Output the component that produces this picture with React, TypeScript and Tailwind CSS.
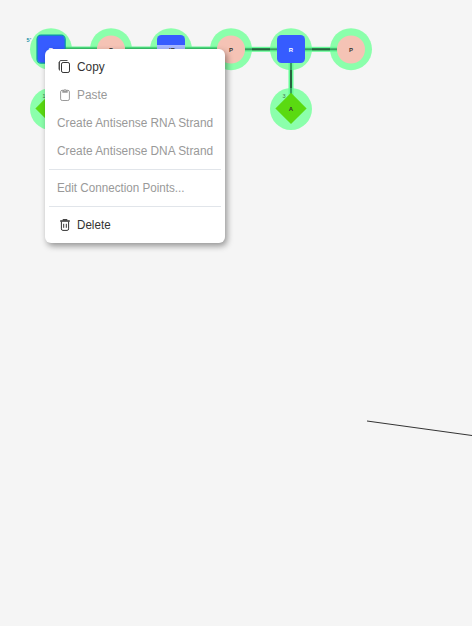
import type { ReactNode } from 'react';

const MINT = '#8bffab';

function Halo({ x, y }: { x: number; y: number }) {
  return <circle cx={x} cy={y} r="21" fill={MINT} />;
}

function Bond({ x1, y1, x2, y2 }: { x1: number; y1: number; x2: number; y2: number }) {
  const vertical = x1 === x2;
  const dx = vertical ? 0 : 7;
  const dy = vertical ? 7 : 0;
  return (
    <g>
      <line x1={x1} y1={y1} x2={x2} y2={y2} stroke="#66fb96" strokeWidth="5" />
      <line x1={x1} y1={y1} x2={x2} y2={y2} stroke="#38a060" strokeWidth="2" />
      <line x1={x1 + dx} y1={y1 + dy} x2={x2 - dx} y2={y2 - dy} stroke="#28633f" strokeWidth="2" />
    </g>
  );
}

function Letter({ x, y, fill = '#333333', children }: { x: number; y: number; fill?: string; children: ReactNode }) {
  return (
    <text x={x} y={y + 2.6} fill={fill} fontSize="6" fontWeight="700" textAnchor="middle">
      {children}
    </text>
  );
}

function Sugar({ x, label, modified = false, outlined = false }: { x: number; label: string; modified?: boolean; outlined?: boolean }) {
  return (
    <g>
      <rect x={x - 14} y="35" width="28" height="28" rx="4.5" fill="#365cff" />
      {outlined && <rect x={x - 14} y="35.2" width="28.2" height="28" rx="4" fill="none" stroke="#079ca4" strokeWidth="1.2" />}
      {modified && <rect x={x - 14} y="45" width="28" height="10" fill="#a7b7ff" />}
      <Letter x={x} y={49.5} fill={modified ? '#333333' : '#ffffff'}>{label}</Letter>
    </g>
  );
}

function Phosphate({ x }: { x: number }) {
  return (
    <g>
      <circle cx={x} cy="49.5" r="14" fill="#f5c3b5" />
      <Letter x={x} y={49.5}>P</Letter>
    </g>
  );
}

function Base({ x }: { x: number }) {
  return (
    <g>
      <path d={`M${x} 92.8l15.6 15.6L${x} 124l-15.6-15.6z`} fill="#5ada11" />
      <Letter x={x} y={108.4}>A</Letter>
    </g>
  );
}

function Canvas() {
  return (
    <svg className="block h-[626px] w-full" viewBox="0 0 472 626" fontFamily="'Liberation Sans', Arial, sans-serif">
      {[51, 111, 171, 231, 291, 351].map((x) => <Halo key={x} x={x} y={49.2} />)}
      <Halo x={51} y={109} />
      <Halo x={291} y={109} />
      {[65, 125, 185].map((x) => (
        <g key={x}>
          <line x1={x} y1="49" x2={x + 32} y2="49" stroke="#66fb96" strokeWidth="5" />
          <line x1={x} y1="48.2" x2={x + 32} y2="48.2" stroke="#32b663" strokeWidth="1.3" />
        </g>
      ))}
      <Bond x1={245} y1={49.3} x2={277} y2={49.3} />
      <Bond x1={305} y1={49.3} x2={337} y2={49.3} />
      <Bond x1={291} y1={63} x2={291} y2={95} />
      <Sugar x={51} label="R" outlined />
      <Phosphate x={111} />
      <Sugar x={171} label="dR" modified />
      <Phosphate x={231} />
      <Sugar x={291} label="R" />
      <Phosphate x={351} />
      <Base x={51} />
      <Base x={291} />
      <text x="26.6" y="42" fontSize="5.5" fontWeight="700" fill="#168fa5">5’</text>
      <text x="282.6" y="98" fontSize="5.5" fill="#427950">3</text>
      <text x="42.6" y="98" fontSize="5.5" fill="#427950">1</text>
      <line x1="367" y1="421" x2="472" y2="435.5" stroke="#333333" strokeWidth="1" />
    </svg>
  );
}

function CopyIcon() {
  return (
    <svg width="16" height="16" viewBox="0 0 16 16" fill="none" stroke="currentColor">
      <path d="M10.5 1.5H4a1.5 1.5 0 0 0-1.5 1.5v8.5" opacity="0.85" />
      <path d="M1.7 3v7.5" opacity="0.5" />
      <rect x="4.5" y="3.5" width="8" height="10" rx="1.6" />
    </svg>
  );
}

function PasteIcon() {
  return (
    <svg width="16" height="16" viewBox="0 0 16 16" fill="none" stroke="currentColor">
      <rect x="3.6" y="3.3" width="8.8" height="10.2" rx="1.6" />
      <path d="M5.3 3.1h1.4a1.4 1.4 0 0 1 2.6 0h1.4v2.6H5.3z" fill="currentColor" stroke="none" />
      <circle cx="8" cy="3.3" r="0.5" fill="white" stroke="none" />
    </svg>
  );
}

function DeleteIcon() {
  return (
    <svg width="16" height="16" viewBox="0 0 16 16" fill="none" stroke="currentColor">
      <path d="M3.2 4h9.6" strokeWidth="1.5" />
      <path d="M5.7 3.5V2.1h4.6v1.4z" fill="currentColor" stroke="none" />
      <path d="M4.4 4.5v7.4a1.5 1.5 0 0 0 1.5 1.5h4.2a1.5 1.5 0 0 0 1.5-1.5V4.5M6.7 6.8v4M9.3 6.8v4" />
    </svg>
  );
}

function Item({ icon, disabled = false, scale = 'scale-x-[0.948]', children }: { icon?: ReactNode; disabled?: boolean; scale?: string; children: ReactNode }) {
  return (
    <button
      disabled={disabled}
      className={`flex h-7 w-full items-center gap-1 px-3 text-left text-[12.5px] whitespace-nowrap ${disabled ? 'text-[#999999]' : 'text-[#333333]'}`}
    >
      {icon}
      <span className={`inline-block origin-left ${scale}`}>{children}</span>
    </button>
  );
}

function Divider() {
  return <div className="mx-1 my-1 h-px bg-[#e1e5ea]" />;
}

export default function App() {
  return (
    <main className="relative h-[626px] w-full overflow-hidden bg-[#f5f5f5] font-['Liberation_Sans',Arial,sans-serif]">
      <Canvas />
      <div className="absolute top-[49px] left-[45px] w-[180px] rounded-md bg-white py-1 shadow-[2px_3px_6px_rgba(0,0,0,0.4)]">
        <Item icon={<CopyIcon />}>Copy</Item>
        <Item icon={<PasteIcon />} disabled>Paste</Item>
        <Item disabled>Create Antisense RNA Strand</Item>
        <Item disabled>Create Antisense DNA Strand</Item>
        <Divider />
        <Item disabled scale="scale-x-[0.932]">Edit Connection Points...</Item>
        <Divider />
        <Item icon={<DeleteIcon />} scale="scale-x-[0.93]">Delete</Item>
      </div>
    </main>
  );
}
